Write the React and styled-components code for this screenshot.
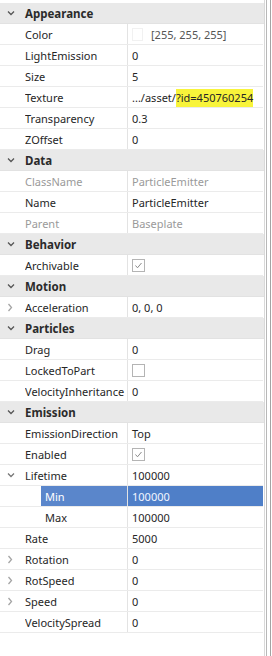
import React from "react";
import styled, { createGlobalStyle } from "styled-components";

const Global = createGlobalStyle`
  html, body { margin: 0; padding: 0; background: #ffffff; }
  body { font-family: "Noto Sans", "Open Sans", sans-serif; font-size: 11px; color: #222; }
`;

const Page = styled.div`
  display: flex;
  width: 272px;
  height: 656px;
  background: #fff;
  overflow: hidden;
`;

const Panel = styled.div`
  width: 264px;
  padding-top: 3px;
  border-right: 1px solid #d9d9d9;
  box-sizing: content-box;
`;

const Gap = styled.div`
  width: 1px;
`;

const Track = styled.div`
  width: 3px;
  border-left: 1px solid #b8b8b8;
  border-right: 1px solid #a3a3a3;
`;

const Header = styled.div`
  display: flex;
  align-items: center;
  height: 20px;
  background: #e9e9e9;
  border-bottom: 1px solid #e2e2e2;
  font-weight: 700;
  color: #2b2b2b;
  font-size: 11.5px;
`;

const Toggle = styled.div`
  width: 25px;
  height: 20px;
  display: flex;
  align-items: center;
  padding-left: 7px;
  box-sizing: border-box;
  flex-shrink: 0;
`;

const Row = styled.div`
  display: grid;
  grid-template-columns: 128px 1fr;
  height: 20px;
  border-bottom: 1px solid #ebebeb;
  width: 263px;
`;

const NameCell = styled.div`
  display: flex;
  align-items: stretch;
  border-right: 1px solid #e3e3e3;
  min-width: 0;
`;

const Indent = styled.div`
  width: 41px;
  flex-shrink: 0;
`;

const Label = styled.div`
  flex: 1;
  display: flex;
  align-items: center;
  padding-left: ${(p) => (p.$sub ? "4px" : "0")};
  white-space: nowrap;
  overflow: hidden;
  color: ${(p) => (p.$selected ? "#ffffff" : p.$readonly ? "#9a9a9a" : "#262626")};
  background: ${(p) => (p.$selected ? "#5a86cb" : "transparent")};
`;

const ValueCell = styled.div`
  display: flex;
  align-items: center;
  gap: 8px;
  padding-left: 4px;
  white-space: nowrap;
  color: ${(p) => (p.$selected ? "#f2f6ff" : p.$readonly ? "#9a9a9a" : "#262626")};
  background: ${(p) => (p.$selected ? "#4f7fc8" : "transparent")};
`;

const Swatch = styled.span`
  width: 11px;
  height: 13px;
  background: #fff;
  border: 1px solid #f1f1f1;
  box-sizing: border-box;
`;

const Muted = styled.span`
  color: #555;
`;

const Highlight = styled.span`
  background: #f8f43a;
  padding: 1px 0 2px;
`;

const Check = styled.span`
  width: 11px;
  height: 11px;
  border: 1px solid #b4b4b4;
  background: #fff;
  display: flex;
  align-items: center;
  justify-content: center;
`;

const ChevronDown = ({ color = "#555" }) => (
  <svg width="8" height="6" viewBox="0 0 8 6">
    <polyline points="1,1.5 4,4.5 7,1.5" fill="none" stroke={color} strokeWidth="1.3" />
  </svg>
);

const ChevronRight = () => (
  <svg width="6" height="9" viewBox="0 0 6 9">
    <polyline points="1.5,1 4.5,4.5 1.5,8" fill="none" stroke="#a5a5a5" strokeWidth="1.3" />
  </svg>
);

const CheckBox = ({ checked }) => (
  <Check>
    {checked && (
      <svg width="9" height="9" viewBox="0 0 9 9">
        <polyline points="1.5,4.5 3.5,6.8 7.5,2" fill="none" stroke="#8a8a8a" strokeWidth="1" />
      </svg>
    )}
  </Check>
);

const sections = [
  {
    title: "Appearance",
    rows: [
      { name: "Color", value: "color" },
      { name: "LightEmission", value: "0" },
      { name: "Size", value: "5" },
      { name: "Texture", value: "texture" },
      { name: "Transparency", value: "0.3" },
      { name: "ZOffset", value: "0" },
    ],
  },
  {
    title: "Data",
    rows: [
      { name: "ClassName", value: "ParticleEmitter", readonly: true },
      { name: "Name", value: "ParticleEmitter" },
      { name: "Parent", value: "Baseplate", readonly: true },
    ],
  },
  { title: "Behavior", rows: [{ name: "Archivable", value: "check-on" }] },
  { title: "Motion", rows: [{ name: "Acceleration", value: "0, 0, 0", toggle: "right" }] },
  {
    title: "Particles",
    rows: [
      { name: "Drag", value: "0" },
      { name: "LockedToPart", value: "check-off" },
      { name: "VelocityInheritance", value: "0" },
    ],
  },
  {
    title: "Emission",
    rows: [
      { name: "EmissionDirection", value: "Top" },
      { name: "Enabled", value: "check-on" },
      { name: "Lifetime", value: "100000", toggle: "down" },
      { name: "Min", value: "100000", sub: true, selected: true },
      { name: "Max", value: "100000", sub: true },
      { name: "Rate", value: "5000" },
      { name: "Rotation", value: "0", toggle: "right" },
      { name: "RotSpeed", value: "0", toggle: "right" },
      { name: "Speed", value: "0", toggle: "right" },
      { name: "VelocitySpread", value: "0" },
    ],
  },
];

const renderValue = (v) => {
  if (v === "color")
    return (
      <>
        <Swatch />
        <Muted>[255, 255, 255]</Muted>
      </>
    );
  if (v === "texture")
    return (
      <span>
        .../asset/<Highlight>?id=450760254</Highlight>
      </span>
    );
  if (v === "check-on") return <CheckBox checked />;
  if (v === "check-off") return <CheckBox />;
  return v;
};

const PropRow = ({ row }) => (
  <Row>
    <NameCell>
      {row.sub ? (
        <Indent />
      ) : (
        <Toggle>
          {row.toggle === "down" && <ChevronDown color="#777" />}
          {row.toggle === "right" && <ChevronRight />}
        </Toggle>
      )}
      <Label $sub={row.sub} $selected={row.selected} $readonly={row.readonly}>
        {row.name}
      </Label>
    </NameCell>
    <ValueCell $selected={row.selected} $readonly={row.readonly}>
      {renderValue(row.value)}
    </ValueCell>
  </Row>
);

export default function App() {
  return (
    <>
      <Global />
      <Page>
        <Panel>
          {sections.map((s) => (
            <React.Fragment key={s.title}>
              <Header>
                <Toggle>
                  <ChevronDown />
                </Toggle>
                {s.title}
              </Header>
              {s.rows.map((r) => (
                <PropRow key={r.name} row={r} />
              ))}
            </React.Fragment>
          ))}
        </Panel>
        <Gap />
        <Track />
      </Page>
    </>
  );
}
